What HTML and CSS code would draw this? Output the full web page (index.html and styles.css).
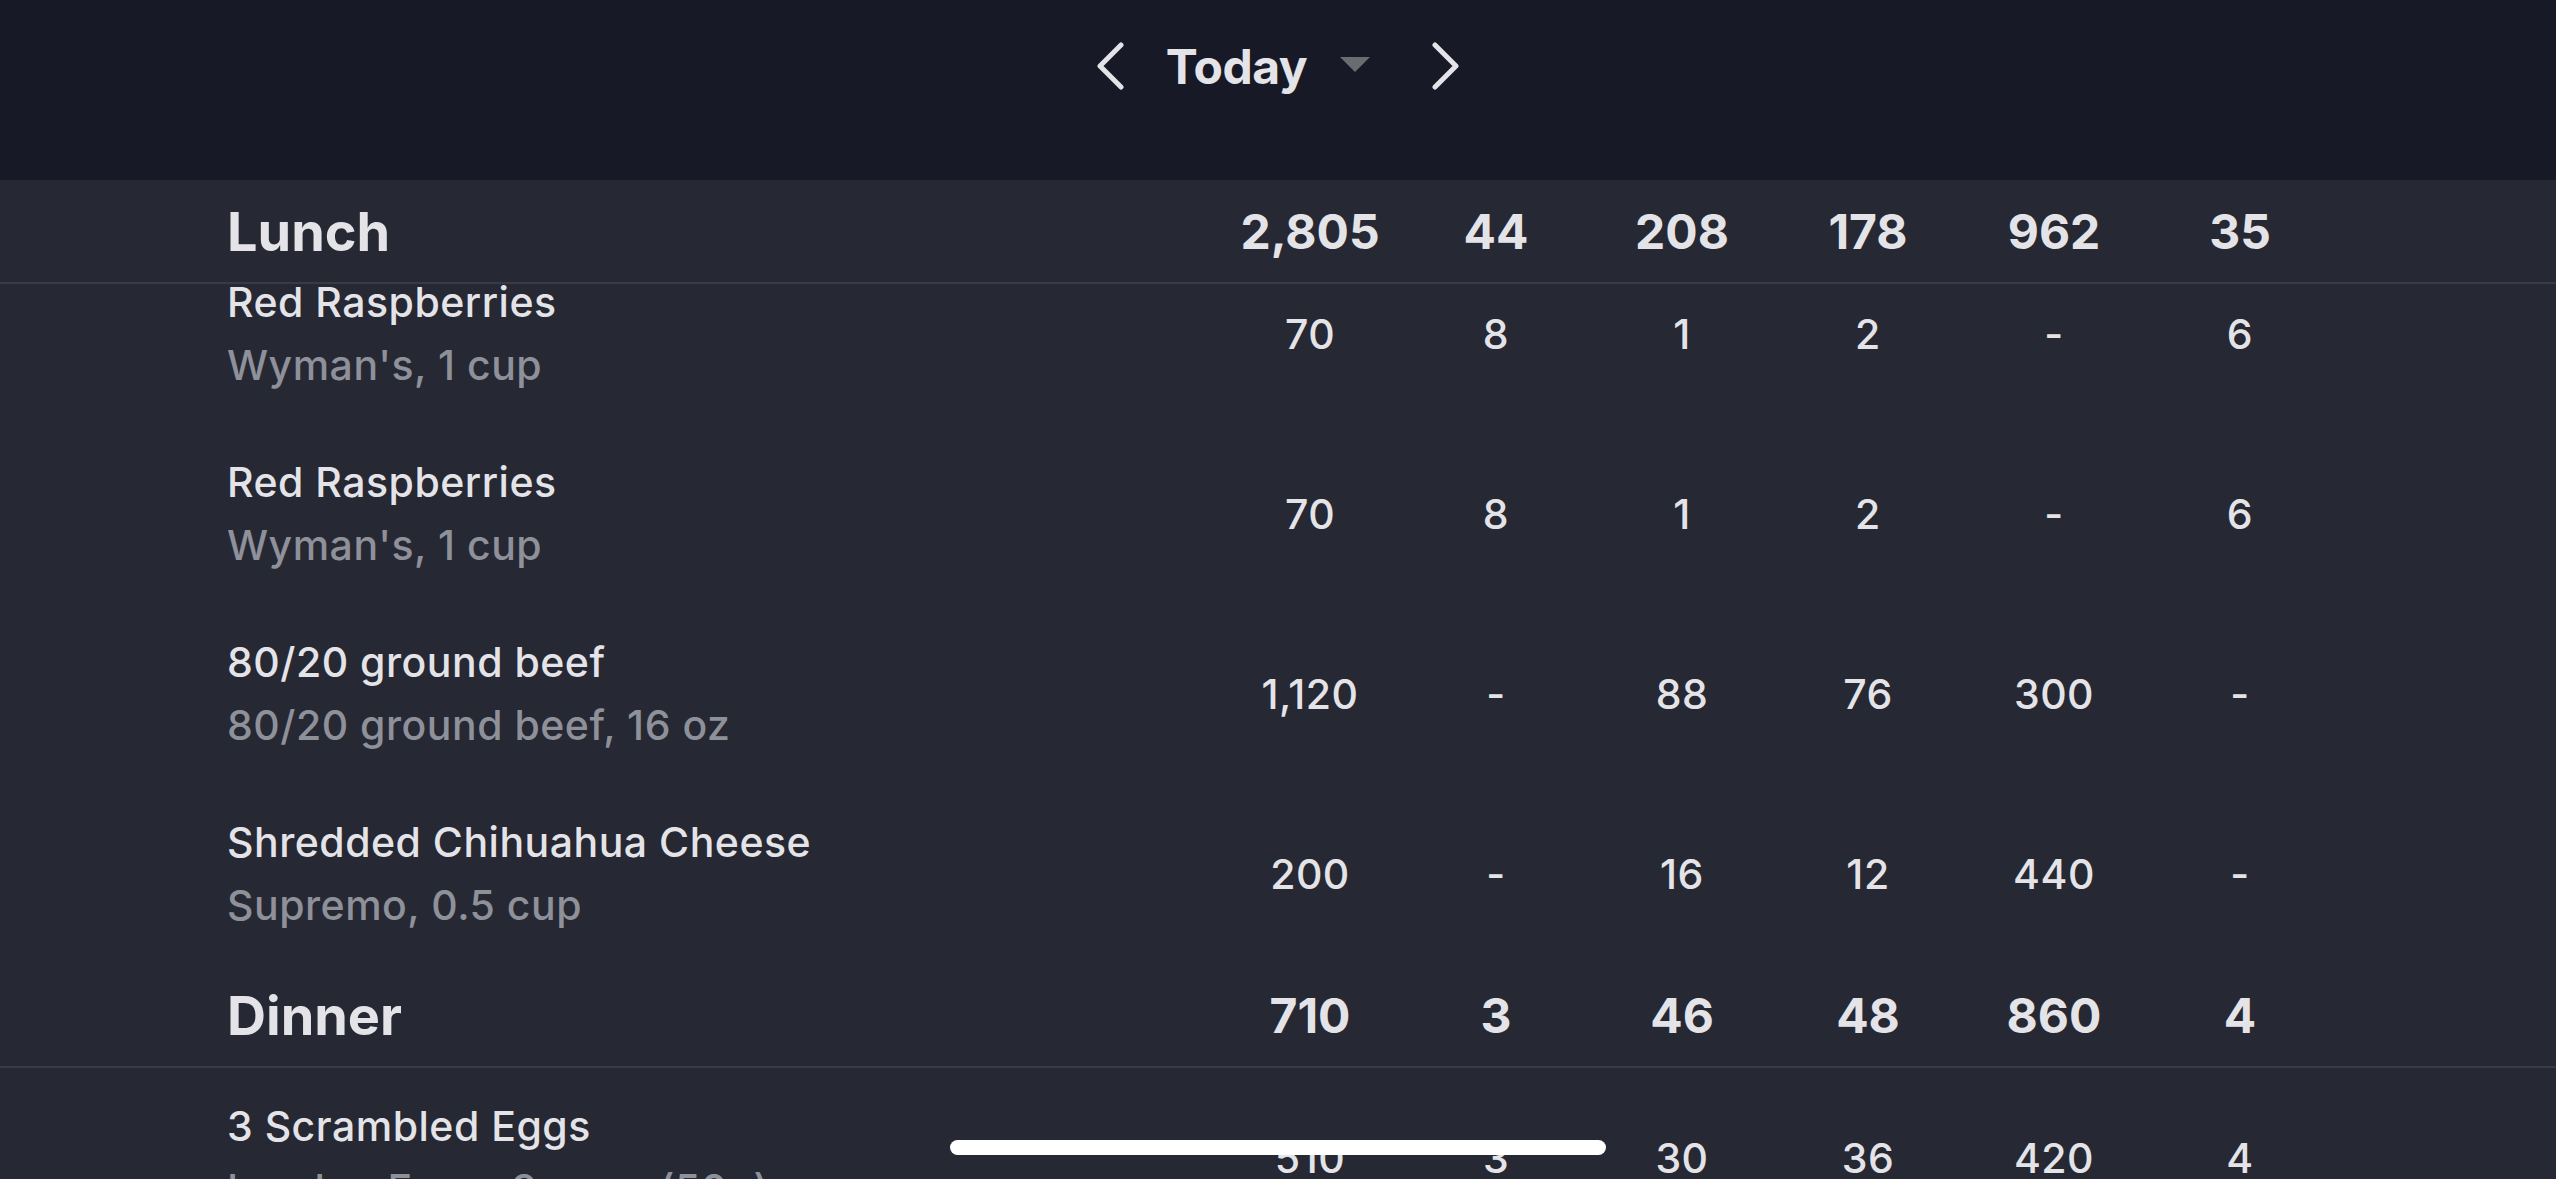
FILE: index.html
```html
<!DOCTYPE html>
<html lang="en">
<head>
    <meta charset="UTF-8">
    <meta name="viewport" content="width=device-width, initial-scale=1.0">
    <title>Food Log</title>
    <link rel="stylesheet" href="styles.css">
</head>
<body>
    <div class="topbar">
        <button class="nav-btn" aria-label="Previous day">
            <svg width="30" height="48" viewBox="0 0 30 48"><polyline points="25,3 4,24 25,45" /></svg>
        </button>
        <div class="date-picker">
            <span class="date-label">Today</span>
            <svg class="caret" width="30" height="16" viewBox="0 0 30 16"><polygon points="0,0 30,0 15,15" /></svg>
        </div>
        <button class="nav-btn" aria-label="Next day">
            <svg width="30" height="48" viewBox="0 0 30 48"><polyline points="5,3 26,24 5,45" /></svg>
        </button>
    </div>

    <div class="meal">
        <div class="meal-head">
            <div class="meal-name">Lunch</div>
            <div>2,805</div>
            <div>44</div>
            <div>208</div>
            <div>178</div>
            <div>962</div>
            <div>35</div>
        </div>
        <div class="meal-items scrolled">
            <div class="food">
                <div class="food-name">
                    <div class="title">Red Raspberries</div>
                    <div class="sub">Wyman's, 1 cup</div>
                </div>
                <div>70</div>
                <div>8</div>
                <div>1</div>
                <div>2</div>
                <div>-</div>
                <div>6</div>
            </div>
            <div class="food">
                <div class="food-name">
                    <div class="title">Red Raspberries</div>
                    <div class="sub">Wyman's, 1 cup</div>
                </div>
                <div>70</div>
                <div>8</div>
                <div>1</div>
                <div>2</div>
                <div>-</div>
                <div>6</div>
            </div>
            <div class="food">
                <div class="food-name">
                    <div class="title">80/20 ground beef</div>
                    <div class="sub">80/20 ground beef, 16 oz</div>
                </div>
                <div>1,120</div>
                <div>-</div>
                <div>88</div>
                <div>76</div>
                <div>300</div>
                <div>-</div>
            </div>
            <div class="food">
                <div class="food-name">
                    <div class="title">Shredded Chihuahua Cheese</div>
                    <div class="sub">Supremo, 0.5 cup</div>
                </div>
                <div>200</div>
                <div>-</div>
                <div>16</div>
                <div>12</div>
                <div>440</div>
                <div>-</div>
            </div>
        </div>
    </div>

    <div class="meal">
        <div class="meal-head">
            <div class="meal-name">Dinner</div>
            <div>710</div>
            <div>3</div>
            <div>46</div>
            <div>48</div>
            <div>860</div>
            <div>4</div>
        </div>
        <div class="meal-items">
            <div class="food">
                <div class="food-name">
                    <div class="title">3 Scrambled Eggs</div>
                    <div class="sub">Leader, Eggs, 3 eggs (50g)</div>
                </div>
                <div>510</div>
                <div>3</div>
                <div>30</div>
                <div>36</div>
                <div>420</div>
                <div>4</div>
            </div>
        </div>
    </div>

    <div class="home-indicator"></div>
</body>
</html>
```

FILE: styles.css
```css
body {
    margin: 0;
    height: 1179px;
    overflow: hidden;
    background-color: #262833;
    color: #e4e4e8;
    font-family: Inter, "Noto Sans", sans-serif;
}

.topbar {
    box-sizing: border-box;
    height: 180px;
    padding-top: 36px;
    display: flex;
    justify-content: center;
    align-items: flex-start;
    background-color: #171a26;
}
.nav-btn {
    height: 60px;
    padding: 0;
    border: none;
    background: none;
    display: flex;
    align-items: center;
}
.nav-btn svg polyline {
    fill: none;
    stroke: #e4e4e8;
    stroke-width: 5;
    stroke-linecap: round;
    stroke-linejoin: round;
}
.date-picker {
    height: 60px;
    display: flex;
    align-items: center;
    margin: 0 60px 0 40px;
}
.date-label {
    font-size: 48px;
    font-weight: 700;
    letter-spacing: -0.5px;
}
.caret {
    margin-left: 33px;
    margin-top: -2px;
}
.caret polygon {
    fill: #6b6c72;
}

.meal-head, .food {
    display: grid;
    grid-template-columns: 1fr repeat(6, 186px);
    align-items: center;
    padding: 0 223px 0 227px;
    text-align: center;
}
.meal-head {
    height: 104px;
    border-bottom: 2px solid #383a46;
    box-sizing: border-box;
    font-size: 48px;
    font-weight: 700;
}
.meal-name {
    text-align: left;
    font-size: 54px;
}
.meal-items.scrolled {
    overflow: hidden;
}
.meal-items.scrolled .food:first-child {
    margin-top: -40px;
}
.food {
    height: 180px;
    font-size: 41px;
    font-weight: 500;
    letter-spacing: 0.5px;
}
.food-name {
    text-align: left;
}
.food-name .title,
.food-name .sub {
    line-height: 63px;
    white-space: nowrap;
}
.food-name .sub {
    color: #8e909a;
}

.home-indicator {
    position: fixed;
    left: 950px;
    bottom: 24px;
    width: 656px;
    height: 15px;
    border-radius: 8px;
    background-color: #fff;
}
```
